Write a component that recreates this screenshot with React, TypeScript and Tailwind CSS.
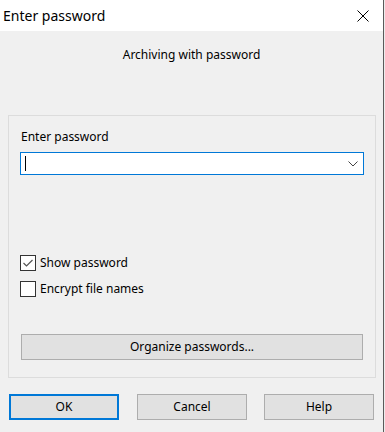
import React from "react";

const font = { fontFamily: '"Noto Sans", "Open Sans", sans-serif' };

function CheckRow({ checked, label, className }: { checked: boolean; label: string; className?: string }) {
  return (
    <div className={"flex items-center h-[16px] " + (className ?? "")}>
      <div className="w-[16px] h-[16px] shrink-0 border border-[#333333] bg-white flex items-center justify-center ml-[11px]">
        {checked && (
          <svg width="14" height="14" viewBox="0 0 14 14">
            <path d="M2.5 7 L5.5 10 L11.5 4" fill="none" stroke="#555555" strokeWidth="1.2" />
          </svg>
        )}
      </div>
      <span className="ml-[4px] text-[12px] leading-[16px] text-black">{label}</span>
    </div>
  );
}

export default function App() {
  return (
    <div className="w-[385px] h-[432px] flex bg-[#f0f0f0] overflow-hidden" style={font}>
      <div className="w-[383px] flex flex-col">
        <div className="h-[31px] bg-white flex items-center justify-between pl-[3px] pr-[14px]">
          <span className="text-[14px] leading-[20px] text-black">Enter password</span>
          <svg width="12" height="12" viewBox="0 0 12 12">
            <path d="M0.5 0.5 L11.5 11.5 M11.5 0.5 L0.5 11.5" stroke="#000" strokeWidth="1" />
          </svg>
        </div>
        <div className="mt-[16px] h-[16px] text-center text-[12px] leading-[16px] text-black">
          Archiving with password
        </div>
        <div className="mt-[52px] ml-[8px] w-[368px] h-[263px] border border-[#dcdcdc] flex flex-col">
          <div className="mt-[13px] ml-[12px] h-[16px] text-[12px] leading-[16px] text-black">Enter password</div>
          <div className="mt-[7px] ml-[11px] w-[344px] h-[23px] border border-[#0078d7] bg-white flex items-center justify-between">
            <div className="ml-[4px] w-px h-[15px] bg-black" />
            <svg width="10" height="6" viewBox="0 0 10 6" className="mr-[5px]">
              <path d="M0.5 0.5 L5 5 L9.5 0.5" fill="none" stroke="#444" strokeWidth="1" />
            </svg>
          </div>
          <CheckRow checked label="Show password" className="mt-[80px]" />
          <CheckRow checked={false} label="Encrypt file names" className="mt-[10px]" />
          <div className="mt-[37px] ml-[12px] w-[342px] h-[26px] border border-[#adadad] bg-[#e1e1e1] flex items-center justify-center text-[12px] text-black">
            Organize passwords...
          </div>
        </div>
        <div className="mt-[16px] flex">
          <div className="ml-[9px] w-[110px] h-[26px] border-2 border-[#0078d7] bg-[#e1e1e1] flex items-center justify-center text-[12px] text-black">
            OK
          </div>
          <div className="ml-[18px] w-[110px] h-[26px] border border-[#adadad] bg-[#e1e1e1] flex items-center justify-center text-[12px] text-black">
            Cancel
          </div>
          <div className="ml-[17px] w-[110px] h-[26px] border border-[#adadad] bg-[#e1e1e1] flex items-center justify-center text-[12px] text-black">
            Help
          </div>
        </div>
      </div>
      <div className="w-px bg-[#5a5a5a]" />
      <div className="w-px bg-[#ececec]" />
    </div>
  );
}
